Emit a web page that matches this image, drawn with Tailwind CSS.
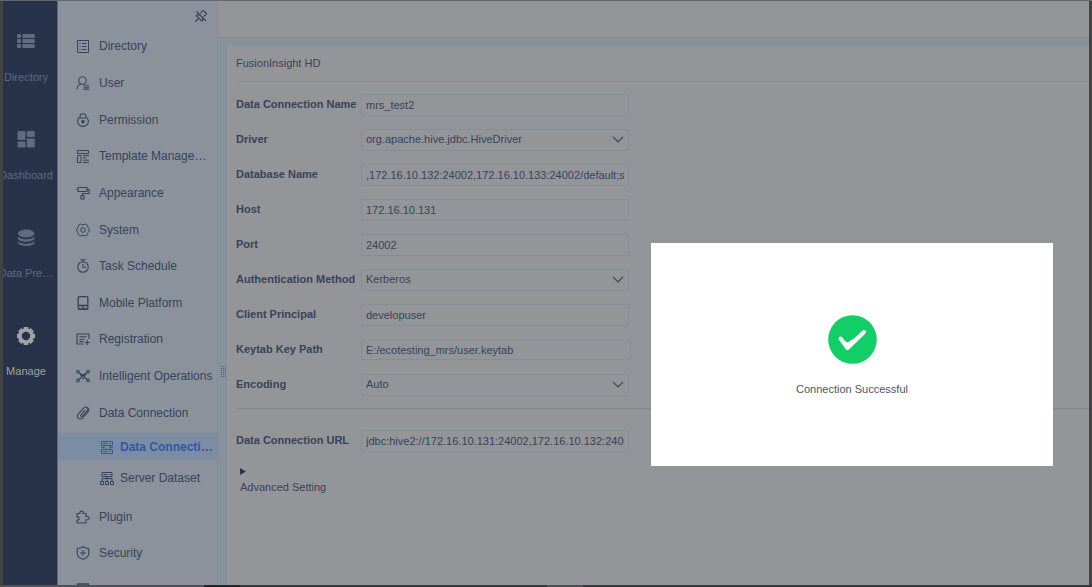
<!DOCTYPE html>
<html lang="en">
<head>
<meta charset="utf-8">
<title>Data Connection</title>
<script src="https://cdn.jsdelivr.net/npm/@tailwindcss/browser@4"></script>
</head>
<body class="relative flex h-screen flex-col overflow-hidden bg-[#434343] font-['Liberation_Sans',Arial,sans-serif] text-[11px] text-[#36435a]">
<div class="h-px shrink-0 bg-[#64686c]"></div>
<div class="flex min-h-0 flex-1 px-[3px]">
  <!-- Module rail -->
  <nav class="flex w-[55px] shrink-0 flex-col overflow-hidden border-r border-[#5d6779] bg-[#28334b] pt-[30px] pr-2 text-[#5f6b7e]">
    <a href="#" class="flex h-[98px] shrink-0 flex-col items-center gap-[21px]">
      <svg class="size-5 shrink-0" viewBox="0 0 20 20" fill="currentColor"><rect x="1" y="3" width="4" height="4" rx="1"/><rect x="6.300" y="3" width="12.500" height="4" rx="1"/><rect x="1" y="8" width="4" height="4" rx="1"/><rect x="6.300" y="8" width="12.500" height="4" rx="1"/><rect x="1" y="13" width="4" height="4" rx="1"/><rect x="6.300" y="13" width="12.500" height="4" rx="1"/></svg>
      <span class="leading-none">Directory</span>
    </a>
    <a href="#" class="flex h-[98px] shrink-0 flex-col items-center gap-[21px]">
      <svg class="size-5 shrink-0" viewBox="0 0 20 20" fill="currentColor"><rect x="1.500" y="2" width="8" height="9" rx="1"/><rect x="1.500" y="12.500" width="8" height="6" rx="1"/><rect x="10.800" y="2" width="8" height="6" rx="1"/><rect x="10.800" y="9.500" width="8" height="9" rx="1"/></svg>
      <span class="leading-none">Dashboard</span>
    </a>
    <a href="#" class="flex h-[98px] shrink-0 flex-col items-center gap-[21px]">
      <svg class="size-5 shrink-0" viewBox="0 0 20 20" fill="currentColor"><ellipse cx="10.200" cy="6.500" rx="8.300" ry="4"/><path d="M1.900 9.300c1.200 4 15.400 4 16.600 0v2c0 4.600-16.600 4.600-16.600 0zM1.900 13.700c1.200 4 15.400 4 16.600 0v1.600c0 4.900-16.600 4.900-16.600 0z"/></svg>
      <span class="whitespace-nowrap leading-none">Data Pre…</span>
    </a>
    <a href="#" class="flex h-[98px] shrink-0 flex-col items-center gap-[21px] text-[#a0a2a6]">
      <svg class="size-5 shrink-0" viewBox="0 0 20 20"><circle cx="10" cy="11" r="6" fill="none" stroke="currentColor" stroke-width="3.600"/><g stroke="currentColor" stroke-width="4.500"><path d="M10 2v2.500M10 17.500V20M1 11h2.500M16.500 11H19M3.700 4.700l1.700 1.700M14.600 15.600l1.700 1.700M3.700 17.300l1.700-1.700M14.600 6.400l1.700-1.700"/></g></svg>
      <span class="leading-none">Manage</span>
    </a>
  </nav>

  <!-- Section menu -->
  <aside class="flex w-[160px] shrink-0 flex-col border-r border-[#838c97] bg-[#8b929c] text-[12px]">
    <div class="flex h-[27px] shrink-0 items-center justify-end pr-[9px] pt-[2px]">
      <button type="button" aria-label="Unpin menu"><svg class="size-[14px]" viewBox="0 0 14 14" fill="none" stroke="currentColor" stroke-width="1.200"><path d="M2.500 2.500l9.500 9.500M1.500 12.500l3-3M2 6.300c1.500-1 2.200.2 3.200-.5M2 6.300l6 6M8.300 12.300c.8-1.700-.3-2.300.3-3.500M6.500 4.500c.8-.5 1-3 3-3l3 3c0 2-2.500 2.200-3 3"/></svg></button>
    </div>
    <ul class="flex h-[403px] shrink-0 flex-col whitespace-nowrap">
      <li class="flex flex-1"><a href="#" class="flex items-center gap-[9px] pl-[18px]"><svg class="size-[14px] shrink-0" viewBox="0 0 14 14" fill="none" stroke="currentColor" stroke-width="1"><path d="M1.500 1.500h11v12h-11zM3.500 4.500h1.200M6 4.500h4.500M3.500 7.500h1.200M6 7.500h4.500M3.500 10.500h1.200M6 10.500h4.500"/></svg>Directory</a></li>
      <li class="flex flex-1"><a href="#" class="flex items-center gap-[9px] pl-[18px]"><svg class="size-[14px] shrink-0" viewBox="0 0 14 14" fill="none" stroke="currentColor" stroke-width="1.100"><circle cx="6.500" cy="4.500" r="3.700"/><path d="M5 8C2.500 8.500 1 10.500 1 13.500M7.500 9.300h5.700M7.500 11.200h5.700M7.500 13.100h5.700"/></svg>User</a></li>
      <li class="flex flex-1"><a href="#" class="flex items-center gap-[9px] pl-[18px]"><svg class="size-[14px] shrink-0" viewBox="0 0 14 14" fill="none" stroke="currentColor" stroke-width="1.100"><path d="M4 5V3.500C4-.2 10-.2 10 3.500V5M2.500 5h9a5.600 5.600 0 0 1 .3 5.500C10 14.300 4 14.300 2.200 10.500A5.600 5.600 0 0 1 2.500 5z"/><rect x="6" y="7.700" width="2" height="2" fill="currentColor"/></svg>Permission</a></li>
      <li class="flex flex-1"><a href="#" class="flex items-center gap-[9px] pl-[18px]"><svg class="size-[14px] shrink-0" viewBox="0 0 14 14" fill="none" stroke="currentColor" stroke-width="1"><path d="M1.500 1.500h11v3h-11zM1.500 6.500H5v7H1.500zM7 6.500h6M7 8.800h3.500M7 11.200h6M7 13.500h6"/></svg>Template Manage…</a></li>
      <li class="flex flex-1"><a href="#" class="flex items-center gap-[9px] pl-[18px]"><svg class="size-[14px] shrink-0" viewBox="0 0 14 14" fill="none" stroke="currentColor" stroke-width="1.100"><path d="M2 1.500h9v4H2zM2 3.500H.5M11 3.500h2v4H6.500v2M5 9.500h3v3.500H5z"/></svg>Appearance</a></li>
      <li class="flex flex-1"><a href="#" class="flex items-center gap-[9px] pl-[18px]"><svg class="size-[14px] shrink-0" viewBox="0 0 14 14" fill="none" stroke="currentColor" stroke-width="1" stroke-linejoin="round"><path d="M4.500 1l1.300.6h2.400L9.500 1l2 1.200.2 1.500 1.100 2 .7 1.300-.7 1.300-1.100 2-.2 1.500-2 1.200-1.300-.6H5.800L4.500 13l-2-1.200-.2-1.500-1.100-2L.5 7l.7-1.300 1.100-2 .2-1.500z"/><circle cx="7" cy="7" r="2.300"/></svg>System</a></li>
      <li class="flex flex-1"><a href="#" class="flex items-center gap-[9px] pl-[18px]"><svg class="size-[14px] shrink-0" viewBox="0 0 14 14" fill="none" stroke="currentColor" stroke-width="1.100"><circle cx="7" cy="8" r="5.300"/><path d="M4.500.8h5M7 1v2M7 5v3.300h3"/></svg>Task Schedule</a></li>
      <li class="flex flex-1"><a href="#" class="flex items-center gap-[9px] pl-[18px]"><svg class="size-[14px] shrink-0" viewBox="0 0 14 14" fill="none" stroke="currentColor" stroke-width="1.300"><rect x="2.200" y=".7" width="9.600" height="12.600" rx="1"/><path d="M2.200 9.500h9.600M2.200 12.800h9.600M7 10.200v2"/></svg>Mobile Platform</a></li>
      <li class="flex flex-1"><a href="#" class="flex items-center gap-[9px] pl-[18px]"><svg class="size-[14px] shrink-0" viewBox="0 0 14 14" fill="none" stroke="currentColor" stroke-width="1.100"><path d="M7.500 12H1V2h12v5M3.500 4.700h7M3.500 7.200h5M3.500 9.600h4M11.300 8v5M8.800 10.500h5"/></svg>Registration</a></li>
      <li class="flex flex-1"><a href="#" class="flex items-center gap-[9px] pl-[18px]"><svg class="size-[14px] shrink-0" viewBox="0 0 14 14" fill="none" stroke="currentColor" stroke-width="1.100"><path d="M3 3.500l8 7M11 3.500l-8 7M4.500 5.500h5L7 9.800z"/><circle cx="1.900" cy="2.600" r="1.300"/><circle cx="12.100" cy="2.600" r="1.300"/><circle cx="1.900" cy="11.400" r="1.300"/><circle cx="12.100" cy="11.400" r="1.300"/></svg>Intelligent Operations</a></li>
      <li class="flex flex-1"><a href="#" class="flex items-center gap-[9px] pl-[18px]"><svg class="size-[14px] shrink-0" viewBox="0 0 14 14" fill="none" stroke="currentColor" stroke-width="1.100" stroke-linecap="round"><path d="M9 4.300L5 8.800c-1 1.200.4 2.300 1.400 1.300l4.600-5c2.400-2.700-1-5.600-3.400-3L2.800 7.300c-3.500 4 1 7.700 4.400 4.200l4-4.500c2.500-3 1.500-5-.5-5.800"/></svg>Data Connection</a></li>
    </ul>
    <ul class="flex shrink-0 flex-col gap-1 whitespace-nowrap pt-[2px] pb-2">
      <li class="flex h-[27px] bg-[#7c8da3] font-bold text-[#3257a8]"><a href="#" class="flex items-center gap-[6px] pl-[42px]"><svg class="size-[14px] shrink-0" viewBox="0 0 14 14" fill="none" stroke="currentColor" stroke-width="1"><path d="M1.500 1.500h11v4h-11zM1.500 9.500h11v4h-11zM3 3.500h4.500M9.500 3.500H11M3 11.500h4.500M9.500 11.500H11M4 5.500v4M10 5.500v4M1 7.500h3M10 7.500h3"/></svg>Data Connecti…</a></li>
      <li class="flex h-[27px]"><a href="#" class="flex items-center gap-[6px] pl-[42px]"><svg class="size-[14px] shrink-0" viewBox="0 0 14 14" fill="none" stroke="currentColor" stroke-width="1"><path d="M2 1.500h10v4H2zM3.500 3.500h4M9.500 3.500H11M7 5.500v5M2 10.500v-3h10v3M.5 10.500h3v3h-3zM5.500 10.500h3v3h-3zM10.500 10.500h3v3h-3z"/></svg>Server Dataset</a></li>
    </ul>
    <ul class="flex h-[109px] shrink-0 flex-col whitespace-nowrap">
      <li class="flex flex-1"><a href="#" class="flex items-center gap-[9px] pl-[18px]"><svg class="size-[14px] shrink-0" viewBox="0 0 14 14" fill="none" stroke="currentColor" stroke-width="1.100" stroke-linejoin="round"><path d="M1 3.500h3C3 .3 8 .3 7.200 3.500H10v3c4.300-1 4.300 4 0 3.200V13H1v-3c3 .7 3-3.700 0-3z"/></svg>Plugin</a></li>
      <li class="flex flex-1"><a href="#" class="flex items-center gap-[9px] pl-[18px]"><svg class="size-[14px] shrink-0" viewBox="0 0 14 14" fill="none" stroke="currentColor" stroke-width="1.100"><path d="M7 .8c2 1.400 4 1.700 5.800 1.700v4.500c0 3.500-3 5.500-5.800 6.300C4.200 12.500 1.200 10.500 1.200 7V2.500C3 2.500 5 2.200 7 .8zM7 4v6M4 7h6"/></svg>Security</a></li>
      <li class="flex flex-1"><a href="#" aria-label="More" class="flex items-center pl-[18px]"><svg class="size-[14px] shrink-0" viewBox="0 0 14 14" fill="none" stroke="currentColor" stroke-width="1.300"><path d="M1.500 1h11v12h-11z"/></svg></a></li>
    </ul>
  </aside>

  <!-- Content -->
  <main class="flex min-w-0 flex-1 flex-col bg-[#87919b]">
    <header class="h-9 shrink-0 bg-[#949599]"></header>
    <div class="flex min-h-0 flex-1">
      <div class="flex w-[9px] shrink-0 flex-col pl-[3px] pt-[329px]" role="separator">
        <svg class="h-3 w-[5px]" viewBox="0 0 5 12" stroke="#4a566c" stroke-width="1" stroke-dasharray="1 1"><path d="M.5 0v12M2.500 0v12M4.500 0v12"/></svg>
      </div>
      <section class="mt-[9px] min-w-0 flex-1 bg-[#949599] pl-[9px]">
        <h1 class="flex h-9 items-center border-b border-[#898d92] font-normal">FusionInsight HD</h1>
        <form>
          <div class="flex flex-col pt-[5px] pb-[6px]">
            <div class="flex h-[35px] items-center"><label for="name" class="w-[125px] shrink-0 font-bold">Data Connection Name</label><input id="name" value="mrs_test2" class="h-[22px] w-[268px] border border-[#828f97] px-1"></div>
            <div class="flex h-[35px] items-center"><label for="driver" class="w-[125px] shrink-0 font-bold">Driver</label><div class="relative w-[268px]"><select id="driver" class="block h-[22px] w-full appearance-none rounded-xs border border-[#828f97] px-1"><option>org.apache.hive.jdbc.HiveDriver</option></select><svg class="pointer-events-none absolute top-[7px] right-[5px] h-[7px] w-3" viewBox="0 0 12 7" fill="none" stroke="currentColor" stroke-width="1.200"><path d="M1 .8l5 5 5-5"/></svg></div></div>
            <div class="flex h-[35px] items-center"><label for="db" class="w-[125px] shrink-0 font-bold">Database Name</label><input id="db" value=",172.16.10.132:24002,172.16.10.133:24002/default;ser" class="h-[22px] w-[268px] border border-[#828f97] px-1"></div>
            <div class="flex h-[35px] items-center"><label for="host" class="w-[125px] shrink-0 font-bold">Host</label><input id="host" value="172.16.10.131" class="h-[22px] w-[268px] border border-[#828f97] px-1"></div>
            <div class="flex h-[35px] items-center"><label for="port" class="w-[125px] shrink-0 font-bold">Port</label><input id="port" value="24002" class="h-[22px] w-[268px] border border-[#828f97] px-1"></div>
            <div class="flex h-[35px] items-center"><label for="auth" class="w-[125px] shrink-0 font-bold">Authentication Method</label><div class="relative w-[268px]"><select id="auth" class="block h-[22px] w-full appearance-none rounded-xs border border-[#828f97] px-1"><option>Kerberos</option></select><svg class="pointer-events-none absolute top-[7px] right-[5px] h-[7px] w-3" viewBox="0 0 12 7" fill="none" stroke="currentColor" stroke-width="1.200"><path d="M1 .8l5 5 5-5"/></svg></div></div>
            <div class="flex h-[35px] items-center"><label for="principal" class="w-[125px] shrink-0 font-bold">Client Principal</label><input id="principal" value="developuser" class="h-[22px] w-[268px] border border-[#828f97] px-1"></div>
            <div class="flex h-[35px] items-center"><label for="keytab" class="w-[125px] shrink-0 font-bold">Keytab Key Path</label><input id="keytab" value="E:/ecotesting_mrs/user.keytab" class="h-5 w-[270px] border border-[#828f97] px-1"></div>
            <div class="flex h-[35px] items-center"><label for="enc" class="w-[125px] shrink-0 font-bold">Encoding</label><div class="relative w-[268px]"><select id="enc" class="block h-[22px] w-full appearance-none rounded-xs border border-[#828f97] px-1"><option>Auto</option></select><svg class="pointer-events-none absolute top-[7px] right-[5px] h-[7px] w-3" viewBox="0 0 12 7" fill="none" stroke="currentColor" stroke-width="1.200"><path d="M1 .8l5 5 5-5"/></svg></div></div>
          </div>
          <div class="border-t border-[#7f8b92] pt-[14px]">
            <div class="flex h-[35px] items-center"><label for="url" class="w-[125px] shrink-0 font-bold">Data Connection URL</label><input id="url" value="jdbc:hive2://172.16.10.131:24002,172.16.10.132:24002" class="h-[22px] w-[268px] border border-[#828f97] px-1"></div>
            <button type="button" class="mt-[10px] ml-1 flex flex-col items-start gap-1 text-[#36435a]">
              <svg class="h-[7px] w-[6px]" viewBox="0 0 6 7" fill="#28344a"><path d="M0 0l6 3.500L0 7z"/></svg>
              <span>Advanced Setting</span>
            </button>
          </div>
        </form>
      </section>
    </div>
  </main>
</div>
<div class="flex h-[2px] shrink-0 bg-[#38383c]">
  <div class="w-[204px] bg-[#505154]"></div><div class="w-9 bg-[#24252b]"></div><div class="w-[307px]"></div><div class="w-9 bg-[#4b4f58]"></div>
</div>

<div role="dialog" aria-label="Connection test result" class="absolute top-[243px] right-[39px] flex h-[223px] w-[402px] flex-col items-center gap-[17px] bg-white pt-[72px] text-[#4a566c]">
  <svg class="size-[49px]" viewBox="0 0 49 49"><circle cx="24.500" cy="24.500" r="24.300" fill="#13ce66"/><path d="M12.500 23.500l7 9.500L36 17" fill="none" stroke="#fff" stroke-width="4" stroke-linecap="round" stroke-linejoin="round"/><path d="M11.500 23.800l8 10.200L37 16.500 19.500 27.500z" fill="#fff"/></svg>
  <p>Connection Successful</p>
</div>
</body>
</html>
